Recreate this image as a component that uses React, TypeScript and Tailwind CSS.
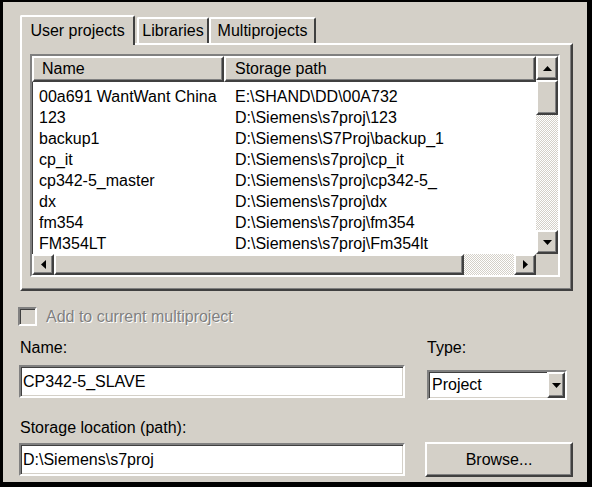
import React from "react";

const raised =
    "border-2 border-t-white border-l-white border-r-[#404040] border-b-[#404040] shadow-[inset_-1px_-1px_0_#808080]";
const sunken =
    "border-2 border-t-[#808080] border-l-[#808080] border-r-white border-b-white shadow-[inset_1px_1px_0_#404040,inset_-1px_-1px_0_#d4d0c8]";

const rows: [string, string][] = [
    ["00a691 WantWant China", "E:\\SHAND\\DD\\00A732"],
    ["123", "D:\\Siemens\\s7proj\\123"],
    ["backup1", "D:\\Siemens\\S7Proj\\backup_1"],
    ["cp_it", "D:\\Siemens\\s7proj\\cp_it"],
    ["cp342-5_master", "D:\\Siemens\\s7proj\\cp342-5_"],
    ["dx", "D:\\Siemens\\s7proj\\dx"],
    ["fm354", "D:\\Siemens\\s7proj\\fm354"],
    ["FM354LT", "D:\\Siemens\\s7proj\\Fm354lt"],
];

const Arrow: React.FC<{ dir: "up" | "down" | "left" | "right" }> = ({ dir }) => {
    const pts = {
        up: "0,5 9,5 4.5,0",
        down: "0,0 9,0 4.5,5",
        left: "5,0 5,9 0,4.5",
        right: "0,0 0,9 5,4.5",
    }[dir];
    const horiz = dir === "left" || dir === "right";
    return (
        <svg width={horiz ? 5 : 9} height={horiz ? 9 : 5} viewBox={horiz ? "0 0 5 9" : "0 0 9 5"}>
            <polygon points={pts} fill="#000" />
        </svg>
    );
};

const ScrollBtn: React.FC<{ dir: "up" | "down" | "left" | "right"; className?: string }> = ({ dir, className }) => (
    <div className={`${raised} bg-[#d4d0c8] flex items-center justify-center ${className ?? ""}`}>
        <Arrow dir={dir} />
    </div>
);

const dither = "bg-[repeating-conic-gradient(#ffffff_0_25%,#d4d0c8_0_50%)] bg-[length:2px_2px]";

const Tab: React.FC<{ label: string; active?: boolean; width: string }> = ({ label, active, width }) => (
    <div
        className={`${width} flex items-center justify-center bg-[#d4d0c8] border-t-2 border-l-2 border-r-2 border-t-white border-l-white border-r-[#404040] rounded-t-[2px] ${
            active ? "h-[30px] -mb-[2px] relative z-10" : "h-[26px]"
        }`}
    >
        {label}
    </div>
);

export default function App() {
    return (
        <div className="w-[592px] h-[487px] bg-black pl-[3px] pt-[2px] pr-[5px] pb-[5px] font-['Liberation_Sans',Arial,sans-serif] text-[16px] text-black">
            <div className="w-full h-full bg-[#d4d0c8] flex flex-col overflow-hidden">
                {/* tabs + panel */}
                <div className="ml-[17px] mt-[13px] w-[553px]">
                    <div className="flex items-end h-[28px]">
                        <Tab label="User projects" active width="w-[115px]" />
                        <div className="w-[2px]" />
                        <Tab label="Libraries" width="w-[72px]" />
                        <Tab label="Multiprojects" width="w-[107px]" />
                    </div>
                    <div className={`${raised} h-[248px] pt-[9px] pl-[8px]`}>
                        <div className={`${sunken} w-[530px] h-[223px] bg-white flex`}>
                            <div className="w-[504px] flex flex-col">
                                <div className="h-[26px] flex">
                                    <div className={`${raised} bg-[#d4d0c8] w-[192px] pl-[8px] leading-[22px]`}>Name</div>
                                    <div className={`${raised} bg-[#d4d0c8] flex-1 pl-[9px] leading-[22px]`}>Storage path</div>
                                </div>
                                <div className="flex-1 pt-[4px] overflow-hidden">
                                    {rows.map(([name, path]) => (
                                        <div key={name} className="grid grid-cols-[192px_1fr] h-[21px] leading-[21px] whitespace-nowrap">
                                            <div className="pl-[7px] overflow-hidden">{name}</div>
                                            <div className="pl-[11px] overflow-hidden">{path}</div>
                                        </div>
                                    ))}
                                </div>
                                <div className="h-[21px] flex">
                                    <ScrollBtn dir="left" className="w-[22px]" />
                                    <div className={`${raised} bg-[#d4d0c8] w-[410px]`} />
                                    <div className={`flex-1 ${dither}`} />
                                    <ScrollBtn dir="right" className="w-[22px]" />
                                </div>
                            </div>
                            <div className="w-[22px] flex flex-col">
                                <ScrollBtn dir="up" className="h-[24px]" />
                                <div className={`${raised} bg-[#d4d0c8] h-[35px]`} />
                                <div className={`flex-1 ${dither}`} />
                                <ScrollBtn dir="down" className="h-[24px]" />
                                <div className="h-[21px] bg-[#d4d0c8]" />
                            </div>
                        </div>
                    </div>
                </div>

                {/* checkbox */}
                <div className="ml-[15px] mt-[16px] h-[19px] flex items-center gap-[9px]">
                    <div className={`${sunken} w-[19px] h-[19px] bg-[#d4d0c8]`} />
                    <span className="text-[#808080] [text-shadow:1px_1px_0_#ffffff]">Add to current multiproject</span>
                </div>

                {/* form */}
                <div className="ml-[16px] flex gap-[22px]">
                    <div className="w-[386px] flex flex-col">
                        <div className="mt-[12px] h-[20px] leading-[20px] pl-[1px]">Name:</div>
                        <div className={`${sunken} mt-[7px] h-[33px] bg-white pl-[2px] leading-[29px]`}>CP342-5_SLAVE</div>
                        <div className="mt-[20px] h-[20px] leading-[20px] pl-[1px]">Storage location (path):</div>
                        <div className={`${sunken} mt-[5px] h-[33px] bg-white pl-[2px] leading-[29px]`}>D:\Siemens\s7proj</div>
                    </div>
                    <div className="w-[146px] flex flex-col">
                        <div className="mt-[12px] h-[20px] leading-[20px]">Type:</div>
                        <div className={`${sunken} mt-[12px] h-[30px] w-[140px] bg-white flex`}>
                            <div className="flex-1 pl-[3px] leading-[26px]">Project</div>
                            <ScrollBtn dir="down" className="w-[18px]" />
                        </div>
                        <div className={`${raised} -ml-[2px] mt-[42px] h-[35px] w-[148px] bg-[#d4d0c8] flex items-center justify-center`}>
                            Browse...
                        </div>
                    </div>
                </div>
            </div>
        </div>
    );
}
